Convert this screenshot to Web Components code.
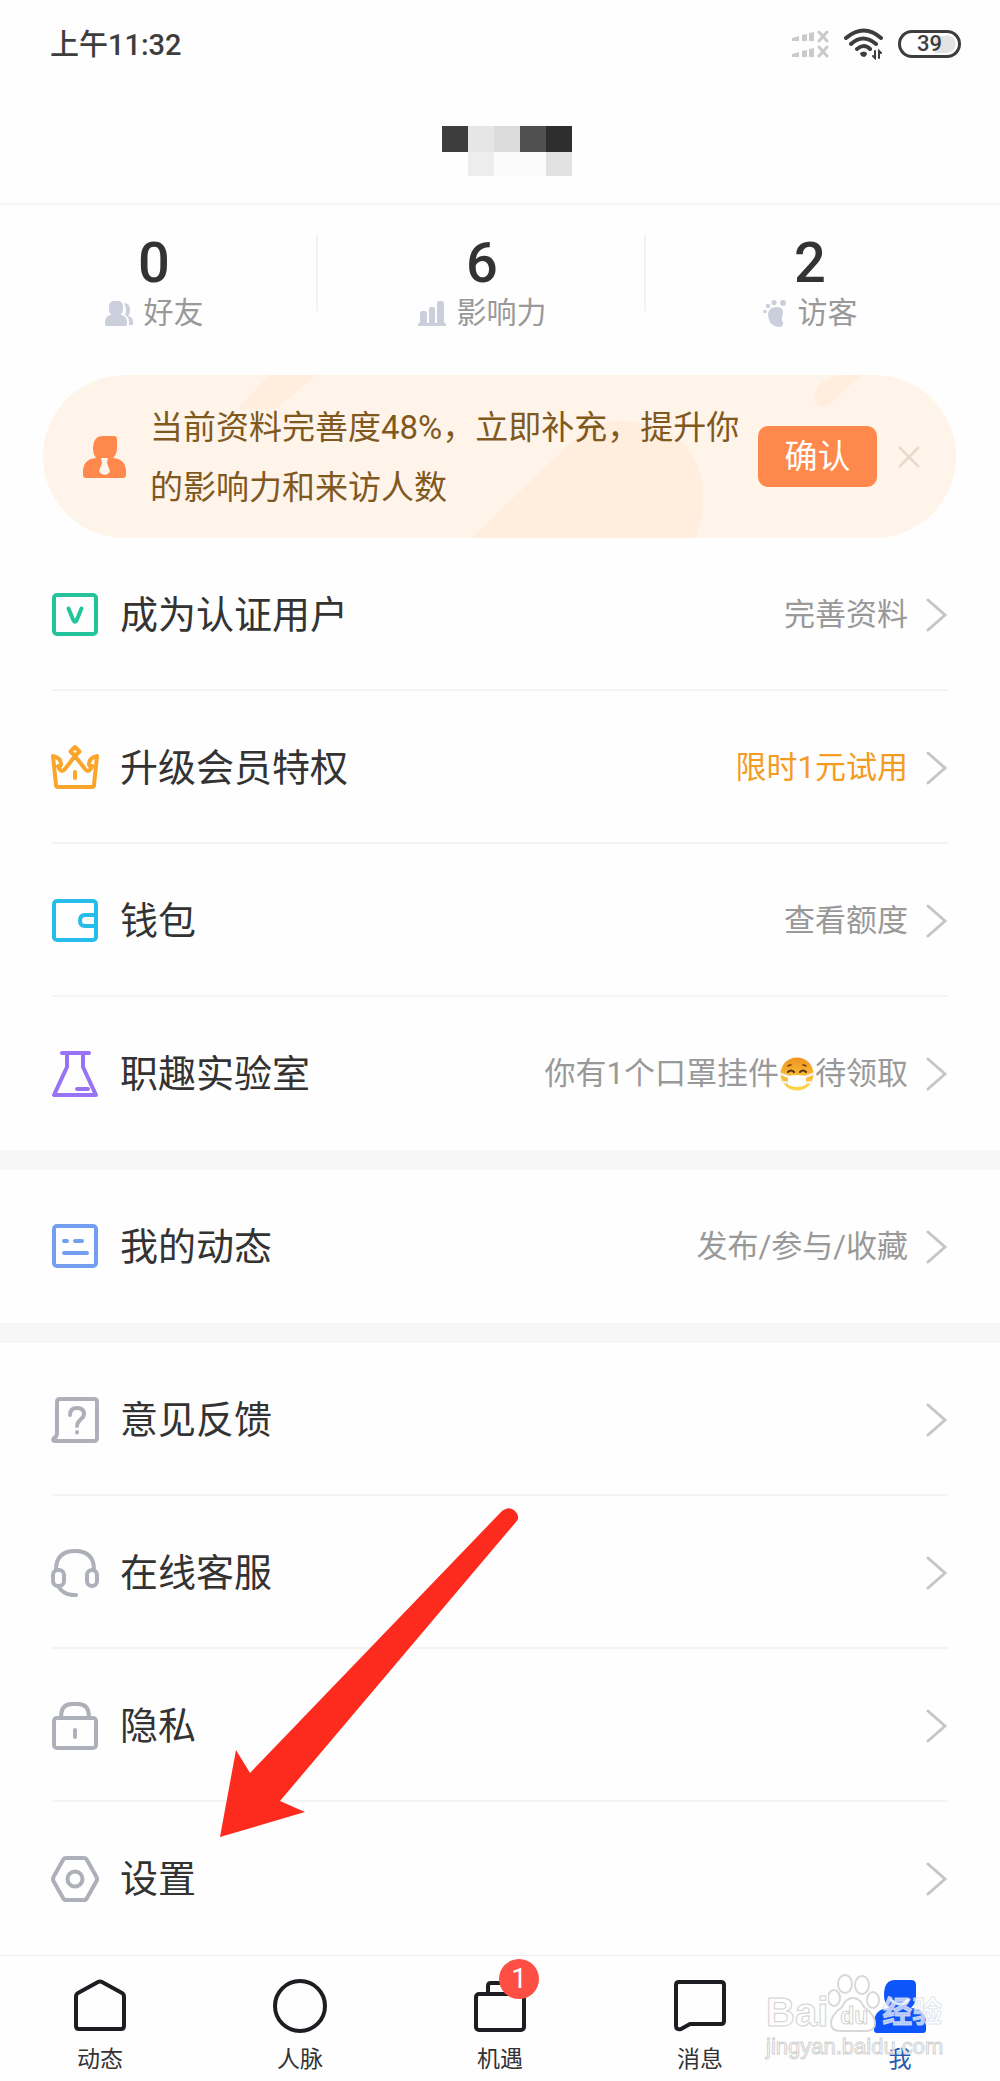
<!DOCTYPE html>
<html lang="zh-CN">
<head>
<meta charset="utf-8">
<meta name="viewport" content="width=device-width, initial-scale=1">
<title>我</title>
<style>
  body { margin: 0; background: #fefefe; color: #333; font-family: Roboto, "Noto Sans CJK SC", sans-serif; }
  main { display: block; }
  svg { display: block; fill: none; stroke-linecap: round; stroke-linejoin: round; }
  .s { stroke: currentColor; stroke-width: 4; }
  .pointed { position: relative; }
  .arrow { position: absolute; left: 219px; bottom: 118px; pointer-events: none; }
  .emoji { display: inline-block; width: 34px; height: 34px; margin: 0 1px; vertical-align: -7px; }
</style>
</head>
<body>
<status-bar></status-bar>
<profile-title></profile-title>
<main>
  <stat-list>
    <stat-item count="0" label="好友">
      <svg width="28" height="28" viewBox="0 0 28 28"><g fill="#cbcfdc"><rect x="4" y="2" width="14" height="14" rx="5"/><path d="M6 14h10v2q6 1 6 7v2q0 2-2 2H2q-2 0-2-2v-2q0-6 6-7z"/><path d="M19 4q6 0 6 7 0 4-2 6 5 1 5 6v3h-4v-4q0-4-4-6 1-2 1-5t-2-7z"/></g></svg>
    </stat-item>
    <stat-item count="6" label="影响力">
      <svg width="28" height="28" viewBox="0 0 28 28"><path fill="#cbcfdc" d="M0 24h28v3H0z"/><path fill="#cbcfdc" d="M2 14q0-2 2-2h3q2 0 2 2v11H2zM11 10q0-2 2-2h2q2 0 2 2v15h-6zM19 4q0-2 2-2h3q2 0 2 2v21h-7z"/></svg>
    </stat-item>
    <stat-item count="2" label="访客">
      <svg width="24" height="28" viewBox="0 0 24 28"><g fill="#cbcfdc"><circle cx="20" cy="4" r="3"/><circle cx="11" cy="3.500" r="2.600"/><circle cx="5" cy="7" r="2.200"/><circle cx="2" cy="12.500" r="1.800"/><path d="M5 14q2-6 8-6 7 0 7 5 0 2-1 5t1 5q1 5-4 5-11-1-11-14z"/></g></svg>
    </stat-item>
  </stat-list>
  <profile-banner action="确认">当前资料完善度48%，立即补充，提升你的影响力和来访人数</profile-banner>

  <menu-section spaced>
    <menu-row label="成为认证用户" style="--icon:#25c39a">
      <svg slot="icon" width="48" height="48" viewBox="0 0 48 48"><g class="s"><rect x="3" y="4" width="42" height="39" rx="3"/><path d="M17.500 17.500l5 12q1.500 2.500 3 0l5-12"/></g></svg>
      完善资料
    </menu-row>
    <menu-row label="升级会员特权" style="--icon:#f9a62b;--note:#f49b22">
      <svg slot="icon" width="48" height="48" viewBox="0 0 48 48"><g class="s"><path d="M2 12l3 29q0 2 2 2h34q2 0 2-2l3-29q-8 2-8 8 0 3 3 2-3 8-7 3L24 12l-10 13q-4 5-7-3 3 1 3-2 0-6-8-8z"/><path fill="#fefefe" d="M24 3l4.500 4.500L24 12l-4.500-4.500z"/><path d="M24 28v6"/></g></svg>
      限时1元试用
    </menu-row>
    <menu-row label="钱包" style="--icon:#27bdea">
      <svg slot="icon" width="48" height="48" viewBox="0 0 48 48"><g class="s"><rect x="3" y="4" width="42" height="39" rx="3"/><path d="M45 18H34q-5 0-5 5.500t5 5.500h11"/></g></svg>
      查看额度
    </menu-row>
    <menu-row label="职趣实验室" style="--icon:#9873f5">
      <svg slot="icon" width="48" height="48" viewBox="0 0 48 48"><g class="s"><path d="M11 3h27M16 3v14L3 45h42L32 17V3M26 39h11"/></g></svg>
      你有1个口罩挂件<svg class="emoji" viewBox="0 0 34 34" role="img" aria-label="戴口罩的脸"><defs><linearGradient id="face" x2="0" y2="1"><stop stop-color="#ef9320"/><stop offset="1" stop-color="#fbd64a"/></linearGradient></defs><circle cx="17" cy="17" r="16.500" fill="url(#face)"/><path d="M8 9q1-1 3-1M26 9q-1-1-3-1" stroke="#6b3d12" stroke-width="1.500"/><path d="M8 15q3-3 6 0M20 15q3-3 6 0" stroke="#5a3010" stroke-width="2"/><path d="M1 17l8 3M33 17l-8 3M2 25l7 1M32 25l-7 1" stroke="#f5efe6" stroke-width="2.500"/><path d="M8 19q9-2 18 0v9q-9 4-18 0z" fill="#fff"/></svg>待领取
    </menu-row>
  </menu-section>

  <menu-section spaced>
    <menu-row label="我的动态" style="--icon:#749ff0">
      <svg slot="icon" width="48" height="48" viewBox="0 0 48 48"><g class="s"><rect x="3" y="3" width="42" height="40" rx="3"/><path d="M13 18h3M24 18h7M13 30h23"/></g></svg>
      发布/参与/收藏
    </menu-row>
  </menu-section>

  <div class="pointed">
    <menu-section>
      <menu-row label="意见反馈">
        <svg slot="icon" width="48" height="48" viewBox="0 0 48 48"><g class="s"><path d="M6 6q0-3 3-3h34q3 0 3 3v36q0 3-3 3H4q-3 0-1-3 3-1 3-5z"/><path d="M19 19q0-7 7-7t7 6q0 3-4 6-3 3-3 6M26 36v.500"/></g></svg>
      </menu-row>
      <menu-row label="在线客服">
        <svg slot="icon" width="48" height="48" viewBox="0 0 48 48"><g class="s"><path d="M5 21Q5 2 24 2t19 19M7 37q6 10 18 9"/><rect x="2" y="21" width="11" height="16" rx="5"/><rect x="36" y="21" width="10" height="16" rx="5"/></g></svg>
      </menu-row>
      <menu-row label="隐私">
        <svg slot="icon" width="48" height="48" viewBox="0 0 48 48"><g class="s"><rect x="3" y="16" width="42" height="30" rx="3"/><path d="M10 15q0-13 11-13h6q11 0 11 13M24 28v7"/></g></svg>
      </menu-row>
      <menu-row label="设置">
        <svg slot="icon" width="48" height="48" viewBox="0 0 48 48"><g class="s"><path d="M15 3h18q2 0 3 2l9 16q2 3 0 6l-9 16q-1 2-3 2H15q-2 0-3-2L3 27q-2-3 0-6l9-16q1-2 3-2z"/><circle cx="24" cy="24" r="7.500"/></g></svg>
      </menu-row>
    </menu-section>
    <svg class="arrow" width="300" height="330" viewBox="219 1507 300 330" aria-hidden="true"><path fill="#fd2b1e" d="M220 1837l16-87 14 23 251-261q8-7 14-1 6 6 1 11l-236 279 25 11z"/></svg>
  </div>
</main>

<tab-bar>
  <tab-item label="动态">
    <svg width="54" height="54" viewBox="0 0 54 54"><path class="s" d="M3 18q0-3 2-4L25 3q2-1 4 0l20 11q2 1 2 4v29q0 3-3 3H6q-3 0-3-3z"/></svg>
  </tab-item>
  <tab-item label="人脉">
    <svg width="54" height="54" viewBox="0 0 54 54"><circle class="s" cx="27" cy="27" r="25"/></svg>
  </tab-item>
  <tab-item label="机遇" badge="1">
    <svg width="54" height="54" viewBox="0 0 54 54"><g class="s"><rect x="3" y="15" width="48" height="36" rx="3"/><path d="M15 14V7q0-3 3-3h18q3 0 3 3v7"/></g></svg>
  </tab-item>
  <tab-item label="消息">
    <svg width="54" height="54" viewBox="0 0 54 54"><path class="s" d="M3 6q0-3 3-3h42q3 0 3 3v36q0 3-3 3H17l-9 5q-5 1-5-3z"/></svg>
  </tab-item>
  <tab-item label="我" active>
    <svg width="54" height="54" viewBox="0 0 54 54"><path fill="#0d55fb" d="M22 1h16q5 0 5 5v12q0 6-5 11 15 1 15 15v7q0 3-3 3H4q-3 0-3-3v-7Q1 30 16 29q-5-5-5-13Q11 1 22 1z"/><path d="M18 21q9 8 17 0" stroke="#dce6fb" stroke-width="3"/></svg>
  </tab-item>
</tab-bar>

<script>
  const define = (name, html, setup) => {
    const template = document.createElement('template');
    template.innerHTML = html;
    customElements.define(name, class extends HTMLElement {
      constructor() {
        super();
        this.attachShadow({ mode: 'open' }).append(template.content.cloneNode(true));
      }
      connectedCallback() {
        if (setup) setup(this, selector => this.shadowRoot.querySelector(selector));
      }
    });
  };

  define('status-bar', `
    <style>
      :host { display: flex; align-items: center; justify-content: space-between; height: 88px; padding: 0 39px 0 50px; color: #3d3d3d; }
      time { padding-top: 2px; font-size: 29px; line-height: 40px; font-weight: 500; }
      .icons { display: flex; align-items: center; gap: 15px; }
      svg { display: block; fill: none; stroke-linecap: round; }
      .battery { box-sizing: border-box; width: 63px; height: 28px; border: 3px solid #3d3d3d; border-radius: 14px; text-align: center; font-size: 22px; line-height: 22px; font-weight: 500;
        background: radial-gradient(circle at 46px 50%, #e3e3e3 8px, transparent 9px), linear-gradient(#e3e3e3, #e3e3e3) 34px 50% / 12px 17px no-repeat; }
    </style>
    <time>上午11:32</time>
    <div class="icons">
      <svg width="38" height="28" viewBox="0 0 38 28" aria-hidden="true"><g fill="#cacaca"><path d="M1 8l7-2v5H1zM11 5l5-1v7h-5zM18 3l5-1v9h-5zM1 24l7-2v5H1zM11 21l5-1v7h-5zM18 19l5-1v9h-5z"/></g><path stroke="#cacaca" stroke-width="3" d="M28 2l8 9M36 2l-8 9M28 17l8 9M36 17l-8 9"/></svg>
      <svg width="39" height="32" viewBox="0 0 39 32" aria-hidden="true"><g stroke="#3d3d3d" stroke-width="4"><path d="M2 10q18-15 35 0M7 16q12-11 25 0M13 21q7-6 13 0"/></g><path fill="#3d3d3d" d="M16 25q4-3 7 0 0 3-3 4-4-1-4-4z"/><path stroke="#3d3d3d" stroke-width="2" d="M31 23v7l-2-2M35 30v-7l2 2"/></svg>
      <div class="battery">39</div>
    </div>`);

  define('profile-title', `
    <style>
      :host { display: flex; justify-content: center; box-sizing: border-box; height: 117px; padding: 38px 0 0 14px; border-bottom: 2px solid #f4f4f4; }
      .mosaic { display: grid; grid-template: 26px 24px / repeat(5, 26px); }
    </style>
    <div class="mosaic" aria-hidden="true">
      <i style="background:#3d3d3d"></i><i style="background:#e6e6e6"></i><i style="background:#dcdcdc"></i><i style="background:#505050"></i><i style="background:#2e2e2e"></i>
      <i></i><i style="background:#ededed"></i><i style="background:#fbfbfb"></i><i style="background:#fbfbfb"></i><i style="background:#e2e2e2"></i>
    </div>`);

  define('stat-list', `
    <style>
      :host { display: grid; grid-template-columns: repeat(3, 1fr); margin: 0 26px 0 -10px; padding: 28px 0 42px; }
      ::slotted(:not(:last-child)) { background: linear-gradient(#f3f3f3, #f3f3f3) right 1px / 2px 77px no-repeat; }
    </style>
    <slot></slot>`);

  define('stat-item', `
    <style>
      :host { display: flex; flex-direction: column; align-items: center; }
      strong { font-size: 56px; line-height: 60px; font-weight: 500; }
      .label { display: flex; align-items: center; gap: 11px; font-size: 30px; line-height: 42px; height: 40px; color: #999; }
    </style>
    <strong></strong>
    <div class="label"><slot></slot><span></span></div>`, (el, $) => {
      $('strong').textContent = el.getAttribute('count');
      $('span').textContent = el.getAttribute('label');
    });

  define('profile-banner', `
    <style>
      :host { position: relative; display: flex; align-items: center; height: 163px; margin: 0 44px 0 43px; padding: 0 25px 0 40px; box-sizing: border-box; border-radius: 82px; overflow: hidden; background: #fff4ea; }
      .decor { position: absolute; inset: 0; width: 100%; height: 100%; }
      svg { display: block; fill: none; flex: none; }
      .who, p, button { position: relative; }
      p { flex: 1; margin: 0 0 0 24px; padding-top: 2px; font-size: 33px; line-height: 60px; color: #80591f; }
      button { flex: none; margin: 0; padding: 0; border: 0; background: none; font: inherit; }
      .go { width: 119px; height: 61px; margin-left: 8px; border-radius: 10px; background: #ff884c; color: #fff; font-size: 33px; line-height: 60px; }
      .close { padding: 10px 11px; margin-left: 10px; }
    </style>
    <svg class="decor" viewBox="0 0 913 163" preserveAspectRatio="none" aria-hidden="true"><g fill="#ffeddd"><path d="M226 0h47l-40 34h-38z"/><path d="M428 163L530 66q20-20 48-20 82 6 82 76 0 20-7 41z"/><path d="M772 21q3-20 32-21h14l-25 23q-5 9-15 9-8-2-6-11z"/></g></svg>
    <svg class="who" width="43" height="44" viewBox="0 0 43 44" aria-hidden="true"><path fill="#ff884c" d="M20 1h11q3 0 3 3v10q0 5-4 9 13 1 13 14v3q0 3-3 3H3q-3 0-3-3v-3q0-13 13-14-3-4-3-9Q10 1 20 1z"/><path fill="#fff4ea" d="M18 23h7l-1 5 3 8q-1 3-5 4-5-1-6-4l3-8z"/></svg>
    <p><slot></slot></p>
    <button class="go" type="button"></button>
    <button class="close" type="button" aria-label="关闭"><svg width="22" height="22" viewBox="0 0 22 22"><path stroke="#e7d9cc" stroke-width="2.500" d="M1 1l20 20M21 1L1 21"/></svg></button>`, (el, $) => {
      $('.go').textContent = el.getAttribute('action');
    });

  define('menu-section', `
    <style>
      :host { display: block; }
      :host([spaced]) { border-bottom: 20px solid #f7f7f7; }
      ::slotted(:not(:last-child)) { --rule: #f4f4f4; }
    </style>
    <slot></slot>`);

  define('menu-row', `
    <style>
      :host { display: block; margin: 0 52px; }
      a { display: flex; align-items: center; box-sizing: border-box; height: 153px; padding-top: 3px; border-bottom: 2px solid var(--rule, transparent); color: #333; text-decoration: none; }
      .icon { width: 48px; margin-left: -1px; color: var(--icon, #adb0b9); }
      .label { margin-left: 21px; font-size: 38px; line-height: 56px; white-space: nowrap; }
      .note { flex: 1; text-align: right; font-size: 31px; line-height: 40px; color: var(--note, #999); white-space: nowrap; }
      svg { display: block; fill: none; margin-left: 18px; }
    </style>
    <a href="#">
      <span class="icon"><slot name="icon"></slot></span>
      <span class="label"></span>
      <span class="note"><slot></slot></span>
      <svg width="22" height="34" viewBox="0 0 22 34" aria-hidden="true"><path stroke="#c6c6c6" stroke-width="3" stroke-linecap="round" d="M2 2l17 15L2 32"/></svg>
    </a>`, (el, $) => {
      $('.label').textContent = el.getAttribute('label');
    });

  define('tab-bar', `
    <style>
      :host { display: block; position: relative; border-top: 1px solid #eee; }
      nav { display: grid; grid-template-columns: repeat(5, 1fr); height: 125px; }
    </style>
    <nav><slot></slot></nav>
    <site-mark></site-mark>`);

  define('tab-item', `
    <style>
      :host { display: block; }
      a { display: flex; flex-direction: column; align-items: center; padding-top: 23px; color: #1d1d22; text-decoration: none; }
      .icon { position: relative; }
      .label { margin-top: 10px; font-size: 23px; line-height: 34px; color: #333; }
      :host([active]) .label { color: #2459ad; }
      .badge { position: absolute; left: 26px; top: -20px; width: 40px; height: 40px; border-radius: 50%; background: #fd4f44; color: #fff; text-align: center; font-size: 28px; line-height: 40px; }
      .badge:empty { display: none; }
    </style>
    <a href="#"><span class="icon"><slot></slot><span class="badge"></span></span><span class="label"></span></a>`, (el, $) => {
      $('.label').textContent = el.getAttribute('label');
      $('.badge').textContent = el.getAttribute('badge') || '';
    });

  define('site-mark', `
    <style>
      :host { position: absolute; right: 54px; top: 17px; width: 180px; pointer-events: none; font-family: "Liberation Sans", "Noto Sans CJK SC", sans-serif; color: rgba(255,255,255,.7); -webkit-text-stroke: 1px #d2d2d2; }
      .brand { display: flex; align-items: flex-end; height: 60px; font-weight: 700; font-size: 40px; line-height: 42px; }
      .paw { position: relative; width: 52px; }
      .paw svg { display: block; fill: rgba(255,255,255,.7); stroke: #d8d8d8; stroke-width: 2; }
      .du { position: absolute; inset: auto 0 0; text-align: center; font-size: 23px; line-height: 34px; }
      .cn { margin-left: 2px; font-size: 30px; line-height: 42px; -webkit-text-stroke-color: rgba(216,222,236,.8); }
      .url { font-size: 22px; line-height: 28px; }
    </style>
    <div class="brand"><span>Bai</span><span class="paw"><svg width="52" height="60" viewBox="0 0 52 60" aria-hidden="true"><ellipse cx="17" cy="11" rx="7" ry="9"/><ellipse cx="34" cy="12" rx="7" ry="9"/><ellipse cx="6" cy="25" rx="6" ry="8"/><ellipse cx="45" cy="27" rx="6" ry="8"/><path d="M25 25q7 0 11 9 11 8 11 16 0 8-9 8H12q-9 0-9-8 0-8 11-16 4-9 11-9z"/></svg><span class="du">du</span></span><span class="cn">经验</span></div>
    <div class="url">jingyan.baidu.com</div>`);
</script>
</body>
</html>
